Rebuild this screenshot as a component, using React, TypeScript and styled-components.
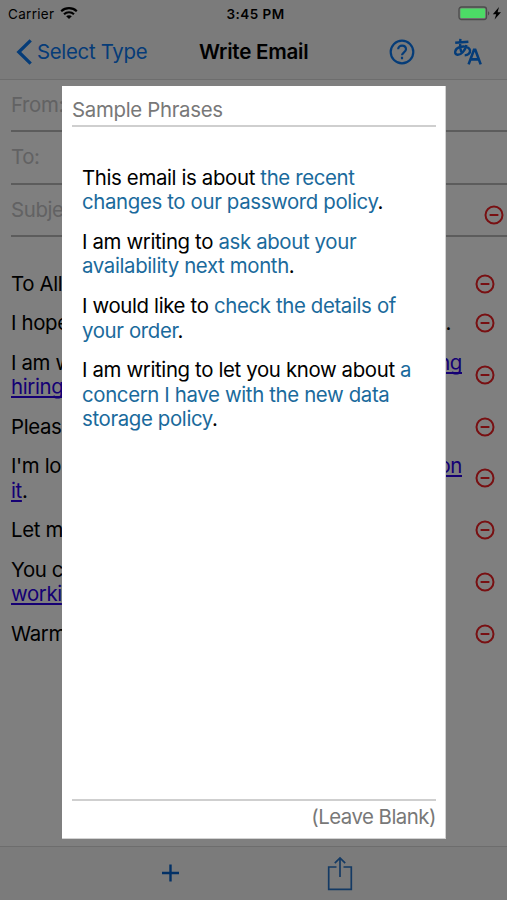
import React from "react";
import styled, { createGlobalStyle } from "styled-components";

const GlobalStyle = createGlobalStyle`
  * { box-sizing: border-box; }
  body { margin: 0; background: #fff; }
`;

const Screen = styled.div`
  position: relative;
  width: 507px;
  height: 900px;
  overflow: hidden;
  display: flex;
  flex-direction: column;
  background: #fff;
  color: #000;
  font-family: Inter, Roboto, sans-serif;
  font-size: 20.4px;
  line-height: 24.75px;
  letter-spacing: -0.36px;
  white-space: nowrap;
`;

const StatusBar = styled.header`
  display: grid;
  grid-template-columns: 1fr auto 1fr;
  align-items: center;
  height: 27px;
  padding: 0 5px 0 8px;
  background: #f7f7f7;
  font-size: 13.5px;
  line-height: 16px;
  letter-spacing: 0.3px;
`;

const Carrier = styled.div`
  display: flex;
  align-items: center;
  gap: 6px;
`;

const Clock = styled.div`
  padding-left: 1px;
  font-weight: 600;
  letter-spacing: 0.45px;
`;

const BatteryGroup = styled.div`
  position: relative;
  z-index: 1;
  display: flex;
  justify-content: flex-end;
  align-items: center;
`;

const NavBar = styled.nav`
  display: flex;
  align-items: center;
  height: 52.5px;
  padding: 0 24px 1px 16px;
  background: #f7f7f7;
  border-bottom: 1px solid #dadada;
  color: #0a78f0;
`;

const BackButton = styled.div`
  display: flex;
  align-items: center;
  gap: 5px;
  width: 183px;
  letter-spacing: -0.3px;
`;

const Title = styled.h1`
  margin: 0;
  flex: 1;
  color: #000;
  font-size: 20.6px;
  font-weight: 600;
  letter-spacing: -0.25px;
`;

const NavActions = styled.div`
  display: flex;
  align-items: center;
  gap: 38px;
`;

const Fields = styled.div`
  padding-left: 11px;
`;

const Field = styled.div`
  display: flex;
  align-items: center;
  justify-content: space-between;
  height: 52.5px;
  padding-top: 1px;
  border-bottom: 2px solid #b8b8b8;
  color: #c4c4c6;
`;

const FieldIcon = styled.div`
  display: flex;
  padding: 10px 3px 0 0;
`;

const Letter = styled.main`
  flex: 1;
  display: flex;
  flex-direction: column;
  gap: 14.6px;
  padding: 35px 12px 0 11px;
`;

const Entry = styled.div`
  display: flex;
  align-items: center;
  justify-content: space-between;
`;

const EntryIcon = styled.div`
  display: flex;
  padding-bottom: 1px;
`;

const Lines = styled.div`
  width: 451px;
`;

const Line = styled.div`
  display: flex;
  justify-content: space-between;
`;

const Tail = styled.span<{ $inset: number }>`
  margin-right: ${(p) => p.$inset}px;
`;

const Blank = styled.span`
  color: #2a00e8;
  text-decoration: underline;
  text-decoration-thickness: 2px;
  text-underline-offset: 2px;
  text-decoration-skip-ink: none;
`;

const Toolbar = styled.footer`
  display: flex;
  align-items: center;
  height: 54px;
  padding-left: 161px;
  gap: 147px;
  background: #f7f7f7;
  border-top: 1px solid #dadada;
`;

const Backdrop = styled.div`
  position: absolute;
  inset: 0;
  padding: 86px 61px 61px 62px;
  background: rgba(0, 0, 0, 0.5);
`;

const Dialog = styled.section`
  display: flex;
  flex-direction: column;
  height: 753px;
  padding: 0 9px 0 10px;
  background: #fff;
  border: 1px solid #d2d2d2;
  border-width: 0 1px 1px 0;
`;

const DialogHead = styled.header`
  height: 41px;
  padding-top: 12px;
  border-bottom: 2px solid #cfcfcf;
  color: #787878;
  letter-spacing: -0.31px;
`;

const Phrases = styled.div`
  flex: 1;
  display: flex;
  flex-direction: column;
  gap: 14.6px;
  padding: 38.6px 10px 0;
`;

const Phrase = styled.p`
  margin: 0;
`;

const Choice = styled.span`
  color: #1a6a9c;
`;

const DialogFoot = styled.footer`
  height: 39px;
  padding-top: 4px;
  border-top: 2px solid #cfcfcf;
  color: #787878;
  text-align: right;
  letter-spacing: -0.5px;
`;

const Wifi = () => (
  <svg width="18" height="13" viewBox="0 0 18 13" fill="none" stroke="#000" strokeWidth="2.2">
    <path d="M1.2 4.2C5.6.2 12.4.2 16.8 4.2" />
    <path d="M4 7.2C6.8 4.6 11.2 4.6 14 7.2" />
    <path d="M9 12 6.2 9.2C7.8 7.8 10.2 7.8 11.8 9.2Z" fill="#000" stroke="none" />
  </svg>
);

const Battery = () => (
  <svg width="44" height="15" viewBox="0 0 44 15">
    <rect x="1" y="1" width="27.5" height="12.5" rx="2.5" fill="none" stroke="#4c4c4c" strokeWidth="1.3" />
    <rect x="2.4" y="2.4" width="24.7" height="9.7" rx="1" fill="#4cdb66" />
    <path d="M30 5.2c1.8.6 1.8 3.6 0 4.2z" fill="#4c4c4c" />
    <path d="M41 1 34.8 8.3h3.4L36.6 13.5 43 6.2h-3.4z" fill="#000" />
  </svg>
);

const Chevron = () => (
  <svg width="16" height="26" viewBox="0 0 16 26" fill="none" stroke="#0a78f0" strokeWidth="3.3">
    <path d="M14.7 1.4 2.8 13l11.9 11.6" />
  </svg>
);

const Help = () => (
  <svg width="26" height="26" viewBox="0 0 26 26" fill="none" stroke="#0a78f0" strokeWidth="2.2">
    <circle cx="13" cy="13" r="11.3" />
    <path d="M9.2 10.3C9.2 5.3 17 5.5 17 10.2c0 3-4 3.2-4 6.1M13 17.7v2.5" />
  </svg>
);

const Translate = () => (
  <svg width="30" height="28" viewBox="0 0 30 28" fill="none" stroke="#0a78f0" strokeWidth="2.4">
    <path d="M2.2 4.8 15.4 3.7M7.4.8c-.8 6.5-.4 11 1.8 15.2M13.5 7C12 13 8 17 4.5 16.8 1 16.6 1.3 11 6.4 9.2c4.6-1.7 10-.4 10.6 3.2.5 3-2.2 4.8-5.3 5" />
    <path d="m15.6 26.4 5.4-14.6h1.3l5.4 14.6M18 21.4h8" strokeWidth="2.6" />
  </svg>
);

const Minus = () => (
  <svg width="20" height="20" viewBox="0 0 20 20" fill="none" stroke="#f02024" strokeWidth="2">
    <circle cx="10" cy="10" r="8.5" />
    <path d="M5.6 10h8.8" />
  </svg>
);

const Plus = () => (
  <svg width="19" height="19" viewBox="0 0 19 19" stroke="#0762cc" strokeWidth="2.4">
    <path d="M1 9h17M9.5 .5v17" />
  </svg>
);

const Share = () => (
  <svg width="26" height="35" viewBox="0 0 26 35" fill="none" stroke="#2874c8" strokeWidth="1.7">
    <path d="M9.5 11H1.7v22.3h22.6V11h-7.8M13 21V2M7.8 7.2 13 2l5.2 5.2" />
  </svg>
);

type LetterLine = { text?: string; link?: string; end?: string; tail?: string; tailLink?: boolean; inset?: number };

const entries: LetterLine[][] = [
  [{ text: "To All" }],
  [{ text: "I hope", tail: ".", inset: 11 }],
  [{ text: "I am w", tail: "ng", tailLink: true }, { link: "hiring" }],
  [{ text: "Pleas" }],
  [{ text: "I'm lo", tail: "on", tailLink: true }, { link: "it", end: "." }],
  [{ text: "Let m" }],
  [{ text: "You c" }, { link: "worki" }],
  [{ text: "Warm" }],
];

export default function App() {
  return (
    <Screen>
      <GlobalStyle />
      <StatusBar>
        <Carrier>Carrier <Wifi /></Carrier>
        <Clock>3:45 PM</Clock>
        <BatteryGroup><Battery /></BatteryGroup>
      </StatusBar>
      <NavBar>
        <BackButton><Chevron />Select Type</BackButton>
        <Title>Write Email</Title>
        <NavActions><Help /><Translate /></NavActions>
      </NavBar>
      <Fields>
        <Field>From:</Field>
        <Field>To:</Field>
        <Field>Subje<FieldIcon><Minus /></FieldIcon></Field>
      </Fields>
      <Letter>
        {entries.map((lines, i) => (
          <Entry key={i}>
            <Lines>
              {lines.map((l, j) => (
                <Line key={j}>
                  <span>{l.text}{l.link && <Blank>{l.link}</Blank>}{l.end}</span>
                  {l.tail && <Tail $inset={l.inset ?? 0}>{l.tailLink ? <Blank>{l.tail}</Blank> : l.tail}</Tail>}
                </Line>
              ))}
            </Lines>
            <EntryIcon><Minus /></EntryIcon>
          </Entry>
        ))}
      </Letter>
      <Toolbar><Plus /><Share /></Toolbar>
      <Backdrop>
        <Dialog>
          <DialogHead>Sample Phrases</DialogHead>
          <Phrases>
            <Phrase>This email is about <Choice>the recent<br />changes to our password policy</Choice>.</Phrase>
            <Phrase>I am writing to <Choice>ask about your<br />availability next month</Choice>.</Phrase>
            <Phrase>I would like to <Choice>check the details of<br />your order</Choice>.</Phrase>
            <Phrase>I am writing to let you know about <Choice>a<br />concern I have with the new data<br />storage policy</Choice>.</Phrase>
          </Phrases>
          <DialogFoot>(Leave Blank)</DialogFoot>
        </Dialog>
      </Backdrop>
    </Screen>
  );
}
